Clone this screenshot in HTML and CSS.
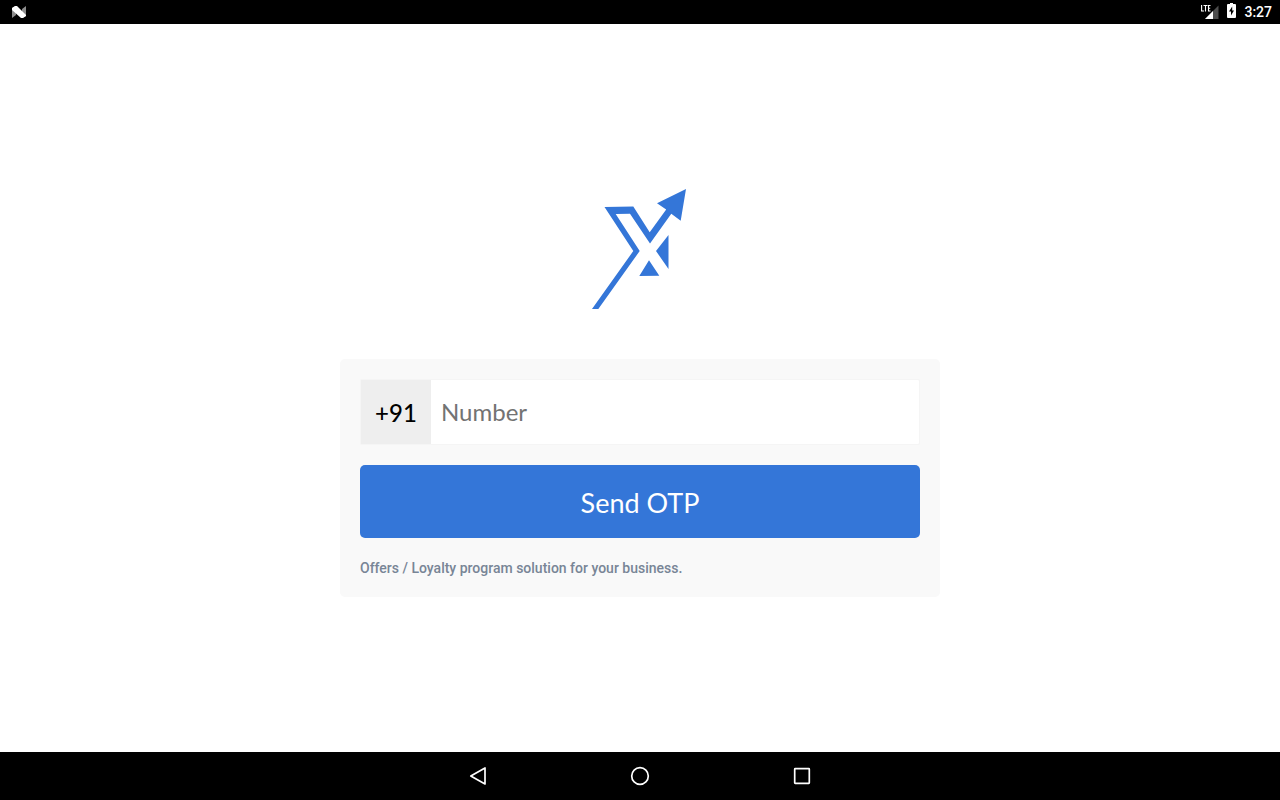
FILE: index.html
```html
<!DOCTYPE html>
<html lang="en">
<head>
<meta charset="utf-8">
<meta name="viewport" content="width=device-width, initial-scale=1">
<title>Send OTP</title>
<link rel="stylesheet" href="styles.css">
</head>
<body>
<header class="status">
  <svg class="status-app" width="14" height="12" viewBox="0 0 14 12" aria-hidden="true">
    <path d="M0 2L4 0V9L0 12ZM10 3L14 0V10L10 12Z" fill="#8c8c8c"/>
    <path d="M0 2L3 0H5L14 9V10L11 12H9L0 4Z" fill="#fff"/>
  </svg>
  <div class="status-info">
    <svg width="18" height="16" viewBox="0 0 18 16" aria-hidden="true">
      <path d="M17.500 1.500V15H4Z" fill="#4d4d4d"/>
      <path d="M12 7V15H4Z" fill="#fff"/>
      <path d="M0 0H10V8H0Z" fill="#000"/>
      <path d="M0.600 1V7H3M2.500 1.500H6.500M4.500 1.500V7.500M9.500 1.500H7.500V7H9.500M7.500 4.200H9.200" fill="none" stroke="#fff" stroke-width="1.100"/>
    </svg>
    <svg class="battery" width="9" height="16" viewBox="0 0 9 16" aria-hidden="true">
      <path d="M3 0H6V1H8Q9 1 9 2V14Q9 15 8 15H1Q0 15 0 14V2Q0 1 1 1H3Z" fill="#fff"/>
      <path d="M5.200 3.500L2 8.500H4V12.500L7 7.500H5.200Z" fill="#000"/>
    </svg>
    <span class="clock">3:27</span>
  </div>
</header>
<main class="screen">
  <svg class="logo" width="120" height="120" viewBox="0 0 120 120" role="img" aria-label="X logo">
    <path fill-rule="evenodd" d="M12 120L53.300 62L24.500 18L53.300 17.500L69.700 43.300L86.200 20.500L77 14.300L106 0L100.700 31.700L91.300 24.800L70 54.500L50 24.700L35.700 25L59.700 62L18.300 120Z"/>
    <path d="M88.500 46V80L76 62ZM69 71.300L79.300 86.700L59.300 87Z"/>
  </svg>
  <form class="card">
    <div class="field">
      <label class="code" for="number">+91</label>
      <input class="number" id="number" type="tel" placeholder="Number" aria-label="Number">
    </div>
    <button class="send" type="button">Send OTP</button>
    <p class="note">Offers / Loyalty program solution for your business.</p>
  </form>
</main>
<nav class="navbar" aria-label="System">
  <button class="nav-button" type="button" aria-label="Back">
    <svg width="20" height="20" viewBox="0 0 20 20"><path d="M17 2V18L2.800 10Z"/></svg>
  </button>
  <button class="nav-button" type="button" aria-label="Home">
    <svg width="20" height="20" viewBox="0 0 20 20"><circle cx="10" cy="10" r="8.300"/></svg>
  </button>
  <button class="nav-button" type="button" aria-label="Recent apps">
    <svg width="20" height="20" viewBox="0 0 20 20"><rect x="2.700" y="2.700" width="14.600" height="14.600" rx="0.500"/></svg>
  </button>
</nav>
</body>
</html>
```
FILE: styles.css
```css
* {
  box-sizing: border-box;
}

body {
  margin: 0;
  min-height: 100vh;
  display: flex;
  flex-direction: column;
  background: #fff;
  font-family: Lato, sans-serif;
}

.status {
  display: flex;
  align-items: center;
  justify-content: space-between;
  height: 24px;
  padding: 0 8px 0 12px;
  background: #000;
  color: #fff;
}

.status-info {
  display: flex;
  align-items: center;
  gap: 8px;
}

.battery {
  margin-bottom: 2px;
}

.clock {
  font: 500 14px/24px Roboto, sans-serif;
}

.screen {
  flex: 1;
  display: flex;
  flex-direction: column;
  align-items: center;
  justify-content: center;
  gap: 50px;
  padding: 10px 20px 0;
}

.logo {
  fill: #3476d8;
}

.card {
  display: flex;
  flex-direction: column;
  gap: 20px;
  width: 100%;
  max-width: 600px;
  padding: 20px;
  border-radius: 5px;
  background: #f9f9f9;
}

.field {
  display: flex;
  height: 66px;
  border: 1px solid #f5f5f5;
  border-radius: 2px;
  background: #fff;
}

.code {
  display: flex;
  align-items: center;
  justify-content: center;
  width: 70px;
  padding-top: 2px;
  background: #eee;
  color: #000;
  font: 500 24px/32px Lato, sans-serif;
}

.number {
  flex: 1;
  min-width: 0;
  padding: 0 10px;
  border: 0;
  background: transparent;
  color: #000;
  font: 24px/32px Lato, sans-serif;
}

.number::placeholder {
  color: #737373;
  opacity: 1;
}

.send {
  height: 73px;
  padding: 2px 20px 0;
  border: 0;
  border-radius: 5px;
  background: #3476d8;
  color: #fff;
  font: 27px/36px Lato, sans-serif;
}

.note {
  margin: 0;
  padding-top: 1px;
  color: #788596;
  font: 500 14px/18px Roboto, sans-serif;
}

.navbar {
  display: flex;
  align-items: center;
  justify-content: center;
  gap: 82px;
  height: 48px;
  background: #000;
}

.nav-button {
  display: flex;
  justify-content: center;
  width: 80px;
  padding: 14px 0;
  border: 0;
  background: transparent;
}

.nav-button svg {
  fill: none;
  stroke: #fff;
  stroke-width: 1.7;
  stroke-linejoin: round;
}
```
